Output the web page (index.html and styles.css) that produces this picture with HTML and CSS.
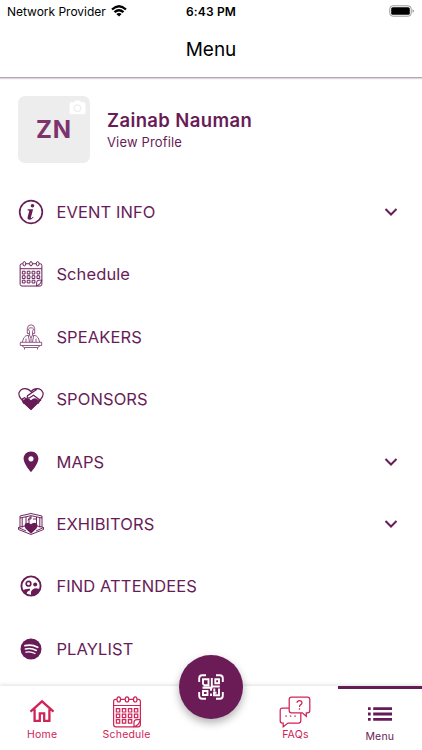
FILE: index.html
```html
<!DOCTYPE html>
<html lang="en">
<head>
<meta charset="utf-8">
<title>Menu</title>
<link rel="stylesheet" href="styles.css">
</head>
<body>
<svg class="sprite" aria-hidden="true">
  <symbol id="calendar" viewBox="0 0 30 33">
    <g fill="none" stroke="currentColor" stroke-width="1.25">
      <path d="M4.5 3.5H3.3Q1.2 3.5 1.2 5.6V29.5Q1.2 31.8 3.5 31.8H26.5Q28.8 31.8 28.8 29.5V5.6Q28.8 3.5 26.7 3.5H25.5M8.5 3.5h4.3M17 3.5h4.5M1.2 9.8h27.6M28.8 24.3h-3.6q-3 0-3 3v4.5q5.500-2 6.600-7.500"/>
      <ellipse cx="6.500" cy="3.500" rx="1.800" ry="2.700"/><ellipse cx="15" cy="3.500" rx="1.800" ry="2.700"/><ellipse cx="23.500" cy="3.500" rx="1.800" ry="2.700"/>
      <path d="M4 13h3.500v3.500H4zM10.200 13h3.500v3.500h-3.500zM16.400 13h3.500v3.500h-3.500zM22.600 13h3.500v3.500h-3.500zM4 18.700h3.500v3.500H4zM10.200 18.700h3.500v3.500h-3.500zM16.400 18.700h3.500v3.500h-3.500zM22.600 18.700h3.500v3.500h-3.500zM4 24.400h3.500v3.500H4zM10.200 24.400h3.500v3.500h-3.500zM16.400 24.400h3.500v3.500h-3.500z"/>
    </g>
  </symbol>
  <symbol id="chevron" viewBox="0 0 14 10"><path d="M1.500 2 7 7.500 12.500 2" fill="none" stroke="currentColor" stroke-width="2"/></symbol>
</svg>

<div class="status">
  <div class="carrier"><span>Network Provider</span>
    <svg width="16" height="12" viewBox="0 0 16 12"><g fill="none" stroke="#000" stroke-width="2.300"><path d="M1 4.500Q8-1.900 15 4.500M3.500 7.200Q8 3.200 12.500 7.200"/></g><path d="M5.300 8.900Q8 6.900 10.700 8.900L8 11.600z"/></svg>
  </div>
  <div class="clock">6:43 PM</div>
  <div class="power"><svg width="26" height="12" viewBox="0 0 26 12"><rect x=".8" y=".8" width="21.400" height="10.400" rx="3" fill="none" stroke="#999"/><rect x="2.200" y="2.200" width="18.600" height="7.600" rx="1.600"/><path d="M23.600 4.300q1.300.4 1.300 1.700t-1.300 1.700z" fill="#888"/></svg></div>
</div>
<header class="title">Menu</header>

<main>
  <section class="profile">
    <div class="avatar"><span>ZN</span>
      <svg class="camera" width="17" height="15" viewBox="0 0 17 15"><path fill="#fff" fill-rule="evenodd" d="M2 2.300h3L6.300.5h4.400L12 2.300h3q1.500 0 1.500 1.500v9q0 1.500-1.500 1.500H2q-1.500 0-1.500-1.500v-9Q.5 2.300 2 2.300zM8.500 4.200a4 4 0 1 0 .01 0zM8.500 5.400a2.800 2.800 0 1 1-.01 0z"/></svg>
    </div>
    <div class="who"><div class="name">Zainab Nauman</div><div class="view">View Profile</div></div>
  </section>

  <nav class="list">
    <div class="row"><svg width="26" height="26" viewBox="0 0 26 26"><circle cx="13" cy="13" r="11.300" fill="none" stroke="currentColor" stroke-width="1.700"/><circle cx="14.500" cy="6.700" r="1.800" fill="currentColor"/><path d="M9.800 10.300h5.300l-2.200 8.200q-.2 1 .7.500l1.500-1.300.5.500q-2.200 2.600-4.200 2.600-2.300-.1-1.800-2.500l1.700-6.500-1.800-.6z" fill="currentColor"/></svg><span>EVENT INFO</span><svg class="chev"><use href="#chevron"/></svg></div>
    <div class="row"><svg class="cal" width="26" height="26"><use href="#calendar"/></svg><span>Schedule</span></div>
    <div class="row"><svg width="26" height="26" viewBox="0 0 26 26" fill="none" stroke="currentColor" stroke-width=".9" opacity=".8"><path d="M9.300 9.500V4.700Q9.500.8 13 .8t3.700 3.900v4.800h-2.200V7.300Q17 4 13 3.800 9 4 11.500 7.300v2.200zM11.500 9.500v1.500q-4.700.5-5.700 2.800L4.300 18M14.500 9.500v1.500q4.700.5 5.700 2.800l1.500 4.200M11.500 11l1.500 3 1.500-3M10.300 11.500l1.200 6.500M15.700 11.500 14.500 18M8 14.500V18M18 14.500V18M13 14v4M2.300 18.300h21.400v3.200H2.300zM4.500 21.500q.2 2 2 2h13q1.800 0 2-2M6.500 23.500v2M19.500 23.500v2"/></svg><span>SPEAKERS</span></div>
    <div class="row"><svg width="26" height="26" viewBox="0 0 26 26"><g fill="none" stroke="currentColor" stroke-width="1.200"><path d="M3.500 13.500Q.2 10 1 6.800 2.500 2.800 6.700 2.600 10.500 2.500 13 5.700 15.500 2.500 19.300 2.600 23.500 2.800 25 6.800q.8 3.200-2.500 6.700M19 3.200 9.500 9.700q-1 2.500 1.500 2.500l4.500-3 7.500 5.500M3.500 13.500l3-1.800 2.500 1.600M22.500 13.500l-3 3.500-6.500 6.500L5 16"/></g><path fill="currentColor" d="m13 24-6.500-6.500q-1.800-3 .3-4.500 3.200-1.900 6.200 1.200 3-3.100 6.200-1.200 2.100 1.500.3 4.500zM3 13.500l2.200-.8 1.300 4.300-1 1zM23 13.500l-2.200-.8-1.300 4.300 1 1z"/></svg><span>SPONSORS</span></div>
    <div class="row"><svg width="26" height="26" viewBox="0 0 26 26"><path fill="currentColor" fill-rule="evenodd" d="M13 2.500C8.700 2.500 5.600 5.700 5.600 9.800 5.600 15 13 23.200 13 23.200s7.400-8.200 7.400-13.400c0-4.100-3.100-7.300-7.400-7.300zm0 4.800a2.600 2.600 0 1 1-.01 0z"/></svg><span>MAPS</span><svg class="chev"><use href="#chevron"/></svg></div>
    <div class="row"><svg width="26" height="26" viewBox="0 0 26 26"><g fill="none" stroke="currentColor" stroke-width=".95"><path d="M2 5 13 2.500 24 5v11l1.500.5v2L13 23.500.5 18.500v-2L2 16zM2 7l11-2.300L24 7M4.200 7v9.500M21.800 7v9.500M2 16l5-1M24 16l-5-1M.5 16.500 8 20M25.500 16.500 18 20M8 6v7M18.500 6v7M10 9.500q.5-3 3-3.500M15 8h3M13 5v3h-2v4"/></g><path fill="currentColor" d="m13 22.800-5.500-5.300Q5.500 14 7.800 12.300q3-1.500 5.200 1 2.200-2.500 5.200-1 2.300 1.700.3 5.200z"/></svg><span>EXHIBITORS</span><svg class="chev"><use href="#chevron"/></svg></div>
    <div class="row"><svg width="26" height="26" viewBox="0 0 26 26"><circle cx="13" cy="13" r="9.600" fill="none" stroke="currentColor" stroke-width="1.900"/><circle cx="10.500" cy="10.700" r="2.300" fill="none" stroke="currentColor" stroke-width="1.700"/><circle cx="17.200" cy="11.500" r="2" fill="currentColor"/><path d="M4.500 17.500q3-2.200 7.500-1.800v1.600q-3.200 1-3.700 4.200zM13 23v-4.200q1.500-3.500 5-3.500 3.500.3 4 1.500Q19 22.500 13 23z" fill="currentColor"/></svg><span>FIND ATTENDEES</span></div>
    <div class="row"><svg width="26" height="26" viewBox="0 0 26 26"><circle cx="13" cy="13" r="10.500" fill="currentColor"/><g fill="none" stroke="#fff" stroke-linecap="round"><path d="M7 9.700q6.500-1.600 12.700 1.500" stroke-width="1.800"/><path d="M7.400 13q5.700-1.500 10.900 1.500" stroke-width="1.500"/><path d="M7.900 16.200q4.900-1.200 9.100 1.300" stroke-width="1.300"/></g></svg><span>PLAYLIST</span></div>
  </nav>
</main>

<footer class="tabs">
  <div class="tab home"><svg width="26" height="24" viewBox="0 0 26 24"><path d="M1.500 12.700 13 2.300l11.500 10.400M5.600 10.300v11.500h5.200v-7.500h4.400v7.500h5.200V10.300" fill="none" stroke="currentColor" stroke-width="2.300"/></svg><span>Home</span></div>
  <div class="tab"><svg width="30" height="32"><use href="#calendar"/></svg><span>Schedule</span></div>
  <div class="tab middle"><button class="fab" aria-label="Scan"><svg width="26" height="26" viewBox="0 0 26 26" fill="none" stroke="#fff" stroke-width="1.900"><path d="M1.200 8V4.200q0-3 3-3H8M18 1.200h3.800q3 0 3 3V8M24.800 18v3.800q0 3-3 3H18M8 24.800H4.200q-3 0-3-3V18"/><path d="M5 5.300h5.500v6H6.500L5 9.800zM17.300 5.300H21v4h-3.700zM5 17h4.500v4H5zM13.800 4v9.500H4.500M13.800 9.500v3H21.800M4.500 13.700h8.500v3M13 19.500V22M16.300 14.500v3M21 14.500v6.700h-5v-2.500h2.500"/></svg></button></div>
  <div class="tab"><svg width="32" height="32" viewBox="0 0 32 32" fill="none" stroke="currentColor" stroke-width="1.250"><path d="M12.500 1.200h16q2.300 0 2.300 2.300v11q0 2.300-2.300 2.300h-1.200v3.500l-4-3.500H12.500q-2.300 0-2.300-2.300v-11q0-2.300 2.300-2.300zM10.200 12H3.500q-2.300 0-2.300 2.300v10.400Q1.200 27 3.500 27h.7v3.800L9 27h10.500q2.300 0 2.300-2.300v-7.900"/><path d="M18 6.800q.2-2.200 2.500-2.200t2.500 2.200q0 1.300-1.500 2.100-1 .6-1 2M20.500 12.200v1.500M6.300 20h1.500M10.800 20h1.500M15.300 20h1.500"/></svg><span>FAQs</span></div>
  <div class="tab active"><svg width="26" height="14" viewBox="0 0 26 14" fill="currentColor"><path d="M1 .3h2.700v2.800H1zM6.200.3H25v2.800H6.200zM1 5.600h2.700v2.800H1zM6.200 5.600H25v2.800H6.200zM1 10.900h2.700v2.800H1zM6.200 10.900H25v2.800H6.200z"/></svg><span>Menu</span></div>
</footer>
</body>
</html>
```
FILE: styles.css
```css
* { box-sizing: border-box; }
body { margin: 0; width: 422px; height: 750px; overflow: hidden; display: flex; flex-direction: column; background: #fff; color: #681c57; font-family: Inter, "Liberation Sans", sans-serif; }
svg { display: block; flex: none; }
span, .name, .view, .clock { white-space: nowrap; }
.sprite { width: 0; height: 0; position: absolute; }
.status { height: 22px; flex: none; display: grid; grid-template-columns: 1fr auto 1fr; align-items: center; padding: 0 7px; color: #000; font-size: 12px; }
.carrier { display: flex; align-items: center; gap: 5px; letter-spacing: -.02px; }
.clock { font-weight: 600; letter-spacing: .15px; }
.power { display: flex; justify-content: flex-end; }
.title { height: 56px; flex: none; display: flex; align-items: center; justify-content: center; border-bottom: 1px solid #b5a6b3; box-shadow: 0 1px 1px #ddd4dc; color: #000; font-size: 19px; font-weight: 400; }
main { height: 608px; flex: none; }
.profile { display: flex; height: 102.800px; padding: 18px 18px 0; gap: 17px; }
.avatar { position: relative; width: 72px; height: 67px; border-radius: 7px; background: #ededed; display: flex; align-items: center; justify-content: center; font-size: 24px; font-weight: 700; letter-spacing: .8px; color: #7d346c; }
.camera { position: absolute; right: 4px; top: 4px; }
.who { padding-top: 12px; }
.name { font-size: 18.500px; font-weight: 600; line-height: 25px; letter-spacing: .37px; }
.view { font-size: 13px; line-height: 19px; letter-spacing: .15px; }
.row { height: 62.400px; display: flex; align-items: center; gap: 12.400px; padding: 0 24px 0 18px; font-size: 16.500px; letter-spacing: .1px; }
.chev { width: 14px; height: 10px; margin-left: auto; }
.tabs { flex: none; height: 64px; display: grid; grid-template-columns: repeat(5, 1fr); background: #fff; box-shadow: 0 -1px 4px rgba(0, 0, 0, .13); color: #ce2457; font-size: 10.500px; }
.tab { display: flex; flex-direction: column; align-items: center; justify-content: flex-end; gap: 0; padding-bottom: 9px; line-height: 13px; letter-spacing: .2px; }
.home { gap: 5px; }
.active { border-top: 3px solid #651b55; color: #651b55; gap: 9px; padding-bottom: 7px; }
.middle { position: relative; }
.fab { position: absolute; top: -31.500px; left: 50%; width: 64px; height: 64px; margin-left: -32px; padding: 0; border: 0; border-radius: 50%; background: #6b1b56; display: flex; align-items: center; justify-content: center; box-shadow: 0 4px 8px rgba(0, 0, 0, .3); }
```
